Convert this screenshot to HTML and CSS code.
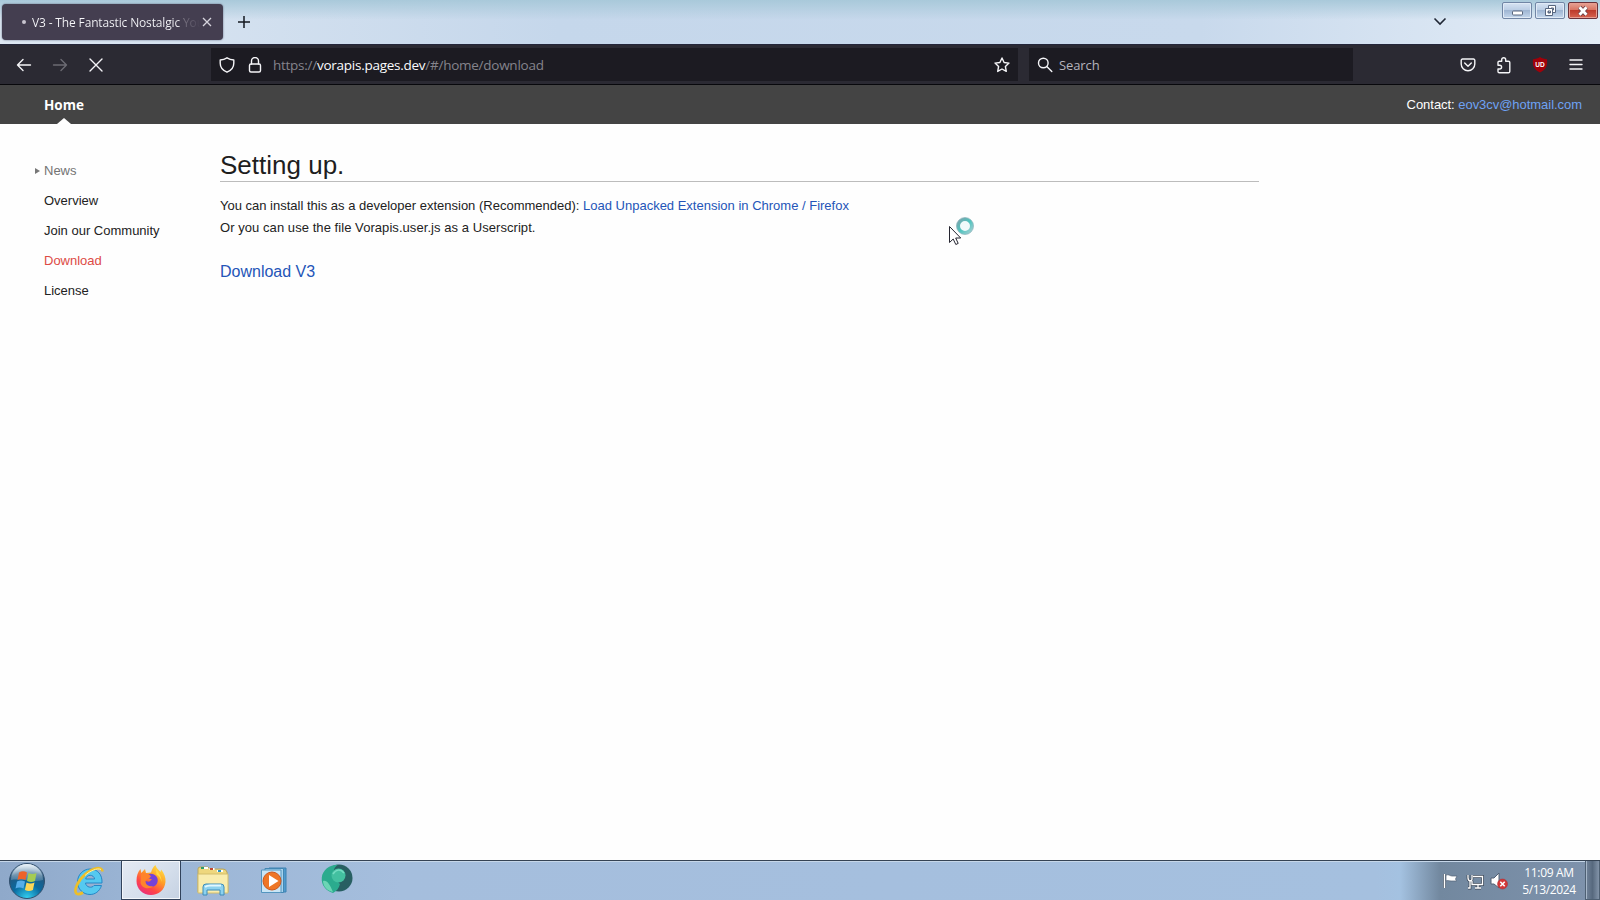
FILE: index.html
```
<!DOCTYPE html>
<html lang="en">
<head>
<meta charset="utf-8">
<title>V3 - The Fantastic Nostalgic YouTube</title>
<link rel="stylesheet" href="styles.css">
</head>
<body>
<div class="screen">
  <header class="tabstrip">
    <div class="tab">
      <span class="tab-dot"></span>
      <span class="tab-title">V3 - The Fantastic Nostalgic You</span>
      <svg class="tab-close" width="12" height="12" viewBox="0 0 12 12"><path d="M2 2l8 8M10 2l-8 8"/></svg>
    </div>
    <svg class="new-tab" width="14" height="14" viewBox="0 0 14 14"><path d="M7 1v12M1 7h12"/></svg>
    <svg class="all-tabs" width="14" height="14" viewBox="0 0 14 14"><path d="M1.500 4.500L7 10l5.500-5.500"/></svg>
    <div class="window-buttons">
      <span class="wbtn"><svg width="30" height="16" viewBox="0 0 30 16"><rect x="10.500" y="8" width="10" height="4" rx="1" fill="#fff" stroke="#58677f"/></svg></span>
      <span class="wbtn"><svg width="30" height="16" viewBox="0 0 30 16" fill="#fff" stroke="#58677f"><path fill-rule="evenodd" d="M13.500 2.500h7v7h-7zM16 5v2h2.500V5z"/><path fill-rule="evenodd" d="M10.500 5.500h7v7h-7zM13 8v2h2.500V8z"/></svg></span>
      <span class="wbtn wbtn-close"><svg width="30" height="16" viewBox="0 0 30 16"><path d="M11.500 4.200l7 7.600M18.500 4.200l-7 7.600" stroke="#6b4148" stroke-width="4.500"/><path d="M11.500 4.200l7 7.600M18.500 4.200l-7 7.600" stroke="#fff" stroke-width="2.800"/></svg></span>
    </div>
  </header>

  <div class="navbar">
    <div class="nav-buttons">
      <svg width="16" height="16" viewBox="0 0 16 16"><path d="M14.500 8H1.500M7 2.500L1.500 8 7 13.500"/></svg>
      <svg class="dim" width="16" height="16" viewBox="0 0 16 16"><path d="M1.500 8h13M9 2.500L14.500 8 9 13.500"/></svg>
      <svg width="16" height="16" viewBox="0 0 16 16"><path d="M2 2l12 12M14 2L2 14"/></svg>
    </div>
    <div class="urlbar">
      <svg width="16" height="16" viewBox="0 0 16 16"><path d="M8 .8C6 2.100 3.800 2.800 1.200 3v3.200c0 4 2.900 7.300 6.800 9 3.900-1.700 6.800-5 6.800-9V3C12.200 2.800 10 2.100 8 .8z"/></svg>
      <svg class="lock" width="16" height="16" viewBox="0 0 16 16"><path d="M4.500 7V4a3.500 3.500 0 017 0v3"/><rect x="2.500" y="7" width="11" height="8" rx="1.500"/></svg>
      <span class="url">https://<b>vorapis.pages.dev</b>/#/home/download</span>
      <svg class="star" width="16" height="16" viewBox="0 0 16 16"><path d="M8 1l2.100 4.500 4.900.6-3.600 3.400.9 4.900L8 12l-4.300 2.400.9-4.900L1 6.100l4.900-.6z"/></svg>
    </div>
    <div class="searchbar">
      <svg width="16" height="16" viewBox="0 0 16 16"><circle cx="6.300" cy="6" r="4.800"/><path d="M9.800 9.500l5 5"/></svg>
      <span class="search-label">Search</span>
    </div>
    <div class="tools">
      <svg width="16" height="16" viewBox="0 0 16 16"><path d="M2.500 2h11a1.300 1.300 0 011.300 1.300V7A6.800 6.800 0 011.200 7V3.300A1.300 1.300 0 012.500 2z"/><path d="M4.700 6L8 9.200 11.300 6"/></svg>
      <svg width="16" height="18" viewBox="0 0 16 18"><path d="M2 8.200V6.500A1.300 1.300 0 013.300 5.200h2.400V3.700a2 2 0 014 0v1.500h2.800a1.300 1.300 0 011.300 1.300v9a1.300 1.300 0 01-1.300 1.300H3.300A1.300 1.300 0 012 15.500V13h1.700a1.900 1.900 0 000-3.800H2z"/></svg>
      <svg width="16" height="16" viewBox="0 0 16 16"><path class="shield" d="M8 0C6 1.600 3.500 2 1 2.200.3 8 1.500 12.500 8 15.500c6.500-3 7.700-7.500 7-13.300C12.500 2 10 1.600 8 0z"/><text class="shield-text" x="8" y="9.500">UD</text></svg>
      <svg class="menu" width="14" height="14" viewBox="0 0 14 14"><path d="M1 2h12M1 6.500h12M1 11h12"/></svg>
    </div>
  </div>

  <div class="sitebar">
    <a class="home">Home</a>
    <div class="contact">Contact: <a>eov3cv@hotmail.com</a></div>
  </div>

  <div class="page">
    <nav class="side">
      <a class="current"><span class="arrow"></span>News</a>
      <a>Overview</a>
      <a>Join our Community</a>
      <a class="active">Download</a>
      <a>License</a>
    </nav>
    <main class="content">
      <h1>Setting up.</h1>
      <p>You can install this as a developer extension (Recommended): <a>Load Unpacked Extension in Chrome / Firefox</a></p>
      <p class="second">Or you can use the file Vorapis.user.js as a Userscript.</p>
      <a class="download">Download V3</a>
    </main>
  </div>

  <footer class="taskbar">
    <div class="start">
      <svg width="38" height="38" viewBox="0 0 38 38">
        <defs>
          <radialGradient id="orb" cx=".5" cy="1" r=".95"><stop offset="0" stop-color="#35d3f3"/><stop offset=".45" stop-color="#096aa0"/><stop offset=".8" stop-color="#24587f"/><stop offset="1" stop-color="#a9c3d9"/></radialGradient>
          <linearGradient id="gloss" x2="0" y2="1"><stop stop-color="#f0f7fc" stop-opacity=".9"/><stop offset="1" stop-color="#b1c8da" stop-opacity=".25"/></linearGradient>
        </defs>
        <circle cx="19" cy="19" r="17.500" fill="url(#orb)" stroke="#32506e"/>
        <path d="M3 18a16 16 0 0132 0c-9 3-21-2-32 0z" fill="url(#gloss)"/>
        <path d="M11 10.500q4-2.500 8 0l-1.500 7.500q-4-2-8 0z" fill="#ed6329"/>
        <path d="M20.500 11q4 2 8 0L27 19q-4 2-8 0z" fill="#a4cc54"/>
        <path d="M9 19.500q4-2 8 0l-1.500 7q-4-2-8 0z" fill="#56aeea"/>
        <path d="M18.500 20.500q4 2 8 0l-1.600 7.500q-4 2-8 0z" fill="#fbd657"/>
      </svg>
    </div>
    <div class="ie">
      <svg width="32" height="32" viewBox="0 0 32 32">
        <path fill="#55c9f0" stroke="#2687c6" stroke-width="1" fill-rule="evenodd" d="M17 4c7.500 0 12.500 5.500 12 14H12.500c.5 4.500 6.500 5.500 8.500 2.500h7.500C26.500 26.500 22 29.500 17 29.500 10 29.500 4.500 24 4.500 17S10 4 17 4zm-4.300 10h8.900c-.7-4.800-8-5-8.900 0z"/>
        <path d="M29.500 6.500C29 1 20 2.500 12.500 9 4.500 16 .5 25.500 3.500 28.500c1.500 1.300 4 .5 6.500-1" fill="none" stroke="#eebf27" stroke-width="2.700"/>
        <path d="M28 4.500c-4-2-11 1.500-16 6" fill="none" stroke="#fff1a0" stroke-width="1"/>
      </svg>
    </div>
    <div class="firefox">
      <svg width="32" height="32" viewBox="0 0 32 32">
        <defs><linearGradient id="fox" x1=".85" y1="0" x2=".2" y2="1"><stop stop-color="#ffe94a"/><stop offset=".4" stop-color="#ff9d25"/><stop offset=".72" stop-color="#ff4547"/><stop offset="1" stop-color="#e62c86"/></linearGradient></defs>
        <path fill="url(#fox)" d="M20.500 1c.5 3 3 4.500 5 7l.6-2.500c3 3.500 4.900 8 4.400 12.500C29.700 26 23.500 31 16 31 8 31 1.500 25 1.500 17c0-5 1.500-9.500 4-12l.8 4L10 5l1 4 5-.5C17 5 18.500 2.500 20.500 1z"/>
        <path fill="#7542d8" d="M11 12c3-4 10-2.500 11.500 2.500 1.200 5-2.500 9-7 8.500-4-.4-5.500-3-5.500-6l4 .7 3-2.200-3-1z"/>
        <path fill="#ff832b" d="M6 10c3-2 7-1 10 2.200l-1.700 2.100c-2.300.1-2.800 1.700-3.800 2.700 0 4 3 5.600 7.500 5.300-4 3.700-11 2-12.500-3.300z"/>
        <path fill="#ffdb42" d="M21 4c1 4 6 7 5.500 14-.8-4-2.500-6-5-7.500z"/>
      </svg>
    </div>
    <div class="explorer">
      <svg width="34" height="32" viewBox="0 0 34 32">
        <path d="M2 4q0-2 2-2h8l2 2h13q3 0 4 3l1 20H2z" fill="#eed77d" stroke="#b6a560"/>
        <path d="M6 3h6M13.500 4h5M21 6h6" stroke-width="2" fill="none" stroke="#fff"/>
        <path d="M5 3h3" stroke="#2e9d69" stroke-width="2"/><path d="M14 4h3" stroke="#c3492f" stroke-width="2"/><path d="M22 6h3" stroke="#2c94bd" stroke-width="2"/>
        <path d="M2 9h30v19H2z" fill="#f9edae" stroke="#d4be6d"/>
        <path d="M7 30V22q0-3 3-3h15q3 0 3 3v8h-4v-5H11v5z" fill="#8dd2ee" stroke="#3c8cba"/>
        <path d="M9 22q2-1.500 5-1.500h11" fill="none" stroke="#e1f8ff" stroke-width="2"/>
      </svg>
    </div>
    <div class="player">
      <svg width="28" height="28" viewBox="0 0 28 28">
        <path d="M9 1h17v24H9z" fill="#519bce" stroke="#3c82b3"/>
        <path d="M5 1.500h18.500v24H5z" fill="#a8d3ed" stroke="#4387b3"/>
        <path d="M1.500 3h19.500v22.500H1.500z" fill="#c9e5f5" stroke="#5395bf"/>
        <circle cx="12" cy="14" r="9" fill="#ee7626" stroke="#cd571d"/>
        <path d="M9 8l9.500 6L9 20z" fill="#fff"/>
      </svg>
    </div>
    <div class="browser">
      <svg width="32" height="30" viewBox="0 0 32 30">
        <circle cx="18" cy="14" r="13.500" fill="#285f62"/>
        <path fill="#2bab8e" d="M17 .8C12 4 11 10 14 15l5 5c-1 4-3 7-7 9C5 27 0 21 .8 13.500 1.500 6 9 .5 17 .8z"/>
        <path fill="#6cd5b5" d="M2 17c4-1 6 2 10 11C6 27 2 22 2 17z"/>
        <circle cx="17.500" cy="11.500" r="7" fill="#43c0a0"/>
        <path d="M12 10c3-5 8-5 11-1" fill="none" stroke="#74dcc2" stroke-width="1.500"/>
      </svg>
    </div>
    <div class="tray">
      <svg width="18" height="18" viewBox="0 0 18 18"><path d="M2.500 2v14" stroke="#465466" stroke-width="3"/><path d="M2.500 2v14" stroke="#fff" stroke-width="1.500"/><path d="M4 3c3-1 4 1 6 1h5l-1.500 3 1 2H9C7 9 6 8 4 9z" fill="#fff" stroke="#526175" stroke-width=".7"/></svg>
      <svg width="18" height="18" viewBox="0 0 18 18"><path d="M7 4.500h9.500v8H6V9M9 16h6M12 13v3M2 3v3q0 3 3 3M6 3v4q0 2-2 2v7H2" fill="none" stroke="#404b5a" stroke-width="2.800"/><path d="M7 4.500h9.500v8H6V9M9 16h6M12 13v3M2 3v3q0 3 3 3M6 3v4q0 2-2 2v7H2" fill="none" stroke="#fff" stroke-width="1.300"/></svg>
      <svg width="18" height="18" viewBox="0 0 18 18"><path d="M1 6h3l5-5v15l-5-4H1z" fill="#fff" stroke="#536175"/><circle cx="12.500" cy="12" r="5" fill="#d43737" stroke="#a82d35" stroke-width=".5"/><path d="M10.300 9.800l4.400 4.400m0-4.400l-4.400 4.400" stroke="#fff" stroke-width="1.600"/></svg>
      <div class="clock"><span>11:09 AM</span><span>5/13/2024</span></div>
      <span class="show-desktop"></span>
    </div>
  </footer>

  <svg class="cursor" width="30" height="32" viewBox="0 0 30 32">
    <defs><linearGradient id="busy" x1="0" y1="0" x2="1" y2="1"><stop stop-color="#7ba4ac"/><stop offset=".5" stop-color="#4fc4bf"/><stop offset="1" stop-color="#a3cfd2"/></linearGradient></defs>
    <circle cx="17" cy="9" r="6.800" fill="#f0fafa" stroke="url(#busy)" stroke-width="3.600"/>
    <circle cx="17" cy="9" r="8.500" fill="none" stroke="#8fb4bb" stroke-width=".7"/>
    <path d="M1.500 9.500v16l3.700-3.500 2.600 5.500 2.400-1.100-2.500-5.400h5z" fill="#fff" stroke="#252530"/>
  </svg>
</div>
</body>
</html>
```

FILE: styles.css
```
* { box-sizing: border-box; }
body { margin: 0; background: #fff; font-family: "Liberation Sans", Arial, sans-serif; }
svg { display: block; flex: none; }
.screen { position: relative; width: 1600px; height: 900px; overflow: hidden; display: flex; flex-direction: column; }

.tabstrip {
  height: 44px; flex: none; display: flex; align-items: flex-start; padding: 4px 2px 0 2px;
  background: linear-gradient(#a9c9da, rgba(200, 218, 234, 0) 45%), linear-gradient(90deg, #dde7f2, #c5d7eb 35%, #c8d9ec 75%, #e4edf7);
  font-family: "Open Sans", "Noto Sans", sans-serif;
}
.tab { width: 221px; height: 36px; border-radius: 4px; background: #443e50; display: flex; align-items: center; padding: 0 10px 0 20px; box-shadow: 0 0 2px #58617a; }
.tab-dot { width: 4px; height: 4px; border-radius: 50%; background: #c8c5cf; flex: none; }
.tab-title {
  margin-left: 6px; width: 168px; white-space: nowrap; font-size: 12px; letter-spacing: -0.15px;
  color: transparent; background: linear-gradient(90deg, #f7f7fa 145px, #77717f 152px, #5c5667 162px, #443e50 168px); -webkit-background-clip: text; background-clip: text;
}
.tab-close { stroke: #d6d4dc; stroke-width: 1.3; fill: none; margin-left: 1px; }
.new-tab { margin: 11px 0 0 14px; stroke: #151820; stroke-width: 1.500; fill: none; }
.all-tabs { margin: 10px 55px 0 auto; stroke: #202735; stroke-width: 1.600; fill: none; }
.window-buttons { display: flex; gap: 3px; margin-top: -2px; }
.wbtn { width: 30px; height: 17px; border: 1px solid #7186a5; border-radius: 2px; background: linear-gradient(#d7e3f2, #bacde4 48%, #9fb6d3 50%, #c4d7ec); box-shadow: inset 0 0 0 1px #e0eaf6; display: flex; justify-content: center; align-items: center; overflow: hidden; }
.wbtn-close { border-color: #69313a; background: linear-gradient(#e6a395, #d97260 48%, #bd3b2c 50%, #d66350); box-shadow: inset 0 0 0 1px #e79d91; }

.navbar { height: 41px; flex: none; display: flex; align-items: center; background: #2b2a33; border-top: 1px solid #24263a; border-bottom: 1px solid #08080c; font-family: "Open Sans", "Noto Sans", sans-serif; }
.navbar svg { fill: none; stroke: #f5f5f8; stroke-width: 1.4; stroke-linejoin: round; stroke-linecap: round; }
.nav-buttons { width: 211px; display: flex; gap: 20px; padding-left: 16px; }
.navbar .dim { stroke: #6c6b73; }
.urlbar { width: 807px; height: 33px; background: #1c1b22; display: flex; align-items: center; padding: 0 8px; }
.lock { margin-left: 12px; }
.url { margin-left: 10px; font-size: 13.500px; color: #85848c; white-space: nowrap; letter-spacing: -0.26px; }
.url b { font-weight: 400; color: #fbfbfe; }
.star { margin-left: auto; }
.searchbar { width: 324px; height: 33px; margin-left: 11px; background: #1c1b22; display: flex; align-items: center; padding-left: 8px; }
.search-label { margin-left: 6px; font-size: 13px; color: #b5b4bc; letter-spacing: -0.1px; }
.tools { flex: 1; display: flex; align-items: center; justify-content: flex-end; gap: 20px; padding-right: 17px; }
.tools .menu { margin-left: 1px; }
.tools .shield { fill: #a00009; stroke: none; }
.tools .shield-text { fill: #fff; stroke: none; font: bold 6.500px "Liberation Sans", sans-serif; text-anchor: middle; }

.sitebar { height: 39px; flex: none; background: #444; display: flex; justify-content: space-between; align-items: stretch; padding: 0 18px 0 44px; color: #fff; font-size: 13px; line-height: 39px; }
.home { position: relative; font-weight: 700; font-family: "Open Sans", sans-serif; font-size: 13.500px; line-height: 41px; }
.home::after { content: ""; position: absolute; left: 50%; top: 33px; margin-left: -7px; border: 7px solid transparent; border-top: 0; border-bottom: 6px solid #fff; }
.contact { letter-spacing: -0.04px; }
.contact a { color: #6ea2f4; }

.page { flex: 1; display: flex; background: #fefefe; font-size: 13px; }
.side { width: 220px; padding: 32px 0 0 44px; display: flex; flex-direction: column; }
.side a { height: 30px; line-height: 30px; color: #222; position: relative; }
.side .current { color: #737373; }
.side .active { color: #dd4b45; }
.arrow { position: absolute; left: -9px; top: 12px; border: 3px solid transparent; border-left: 5px solid #777; border-right: 0; }
.content { width: 1039px; padding-top: 24px; color: #222; }
h1 { margin: 0; height: 34px; line-height: 34px; font-size: 26px; font-weight: 400; border-bottom: 1px solid #bcbcbc; color: #1e1e1e; }
p { margin: 13px 0 0; height: 22px; line-height: 22px; white-space: nowrap; }
.second { margin: 0; letter-spacing: 0.06px; }
.content a { color: #2455b8; }
.content .download { display: block; margin-top: 21px; line-height: 24px; font-size: 16px; }

.taskbar { height: 40px; flex: none; display: flex; align-items: center; border-top: 1px solid #354354; background: linear-gradient(90deg, #8fa9ca, #9bb5d5 9%, #a5bedd 25%, #a5c0df 86%, #a4c2e1 87.500%, #72889f 90%, #7f93ad); box-shadow: inset 0 1px #c6d7e9; }
.start { width: 72px; padding-left: 8px; }
.ie { width: 49px; padding-left: 1px; }
.firefox { width: 60px; height: 39px; padding: 3px 0 0 13px; border: 1px solid #31425b; border-top: 0; background: linear-gradient(135deg, #e4eaf3, #d4deeb 60%, #c5d1e2); box-shadow: inset 0 0 0 1px #f3f6fa; }
.explorer { width: 79px; padding-left: 15px; }
.player { width: 61px; }
.browser { margin-top: -3px; }
.tray { margin-left: auto; height: 39px; display: flex; align-items: center; gap: 6px; }
.clock { width: 58px; margin: 0 6px 0 6px; display: flex; flex-direction: column; align-items: center; color: #fff; font: 12px/17px "Open Sans", sans-serif; letter-spacing: -0.35px; white-space: nowrap; }
.show-desktop { width: 15px; height: 39px; margin-left: -5px; border: 1px solid #4e6073; border-top: 0; background: linear-gradient(90deg, #71839a, #57697e, #8293a8); box-shadow: inset 1px 0 #a6b6c8; }

.cursor { position: absolute; left: 948px; top: 217px; }
```
